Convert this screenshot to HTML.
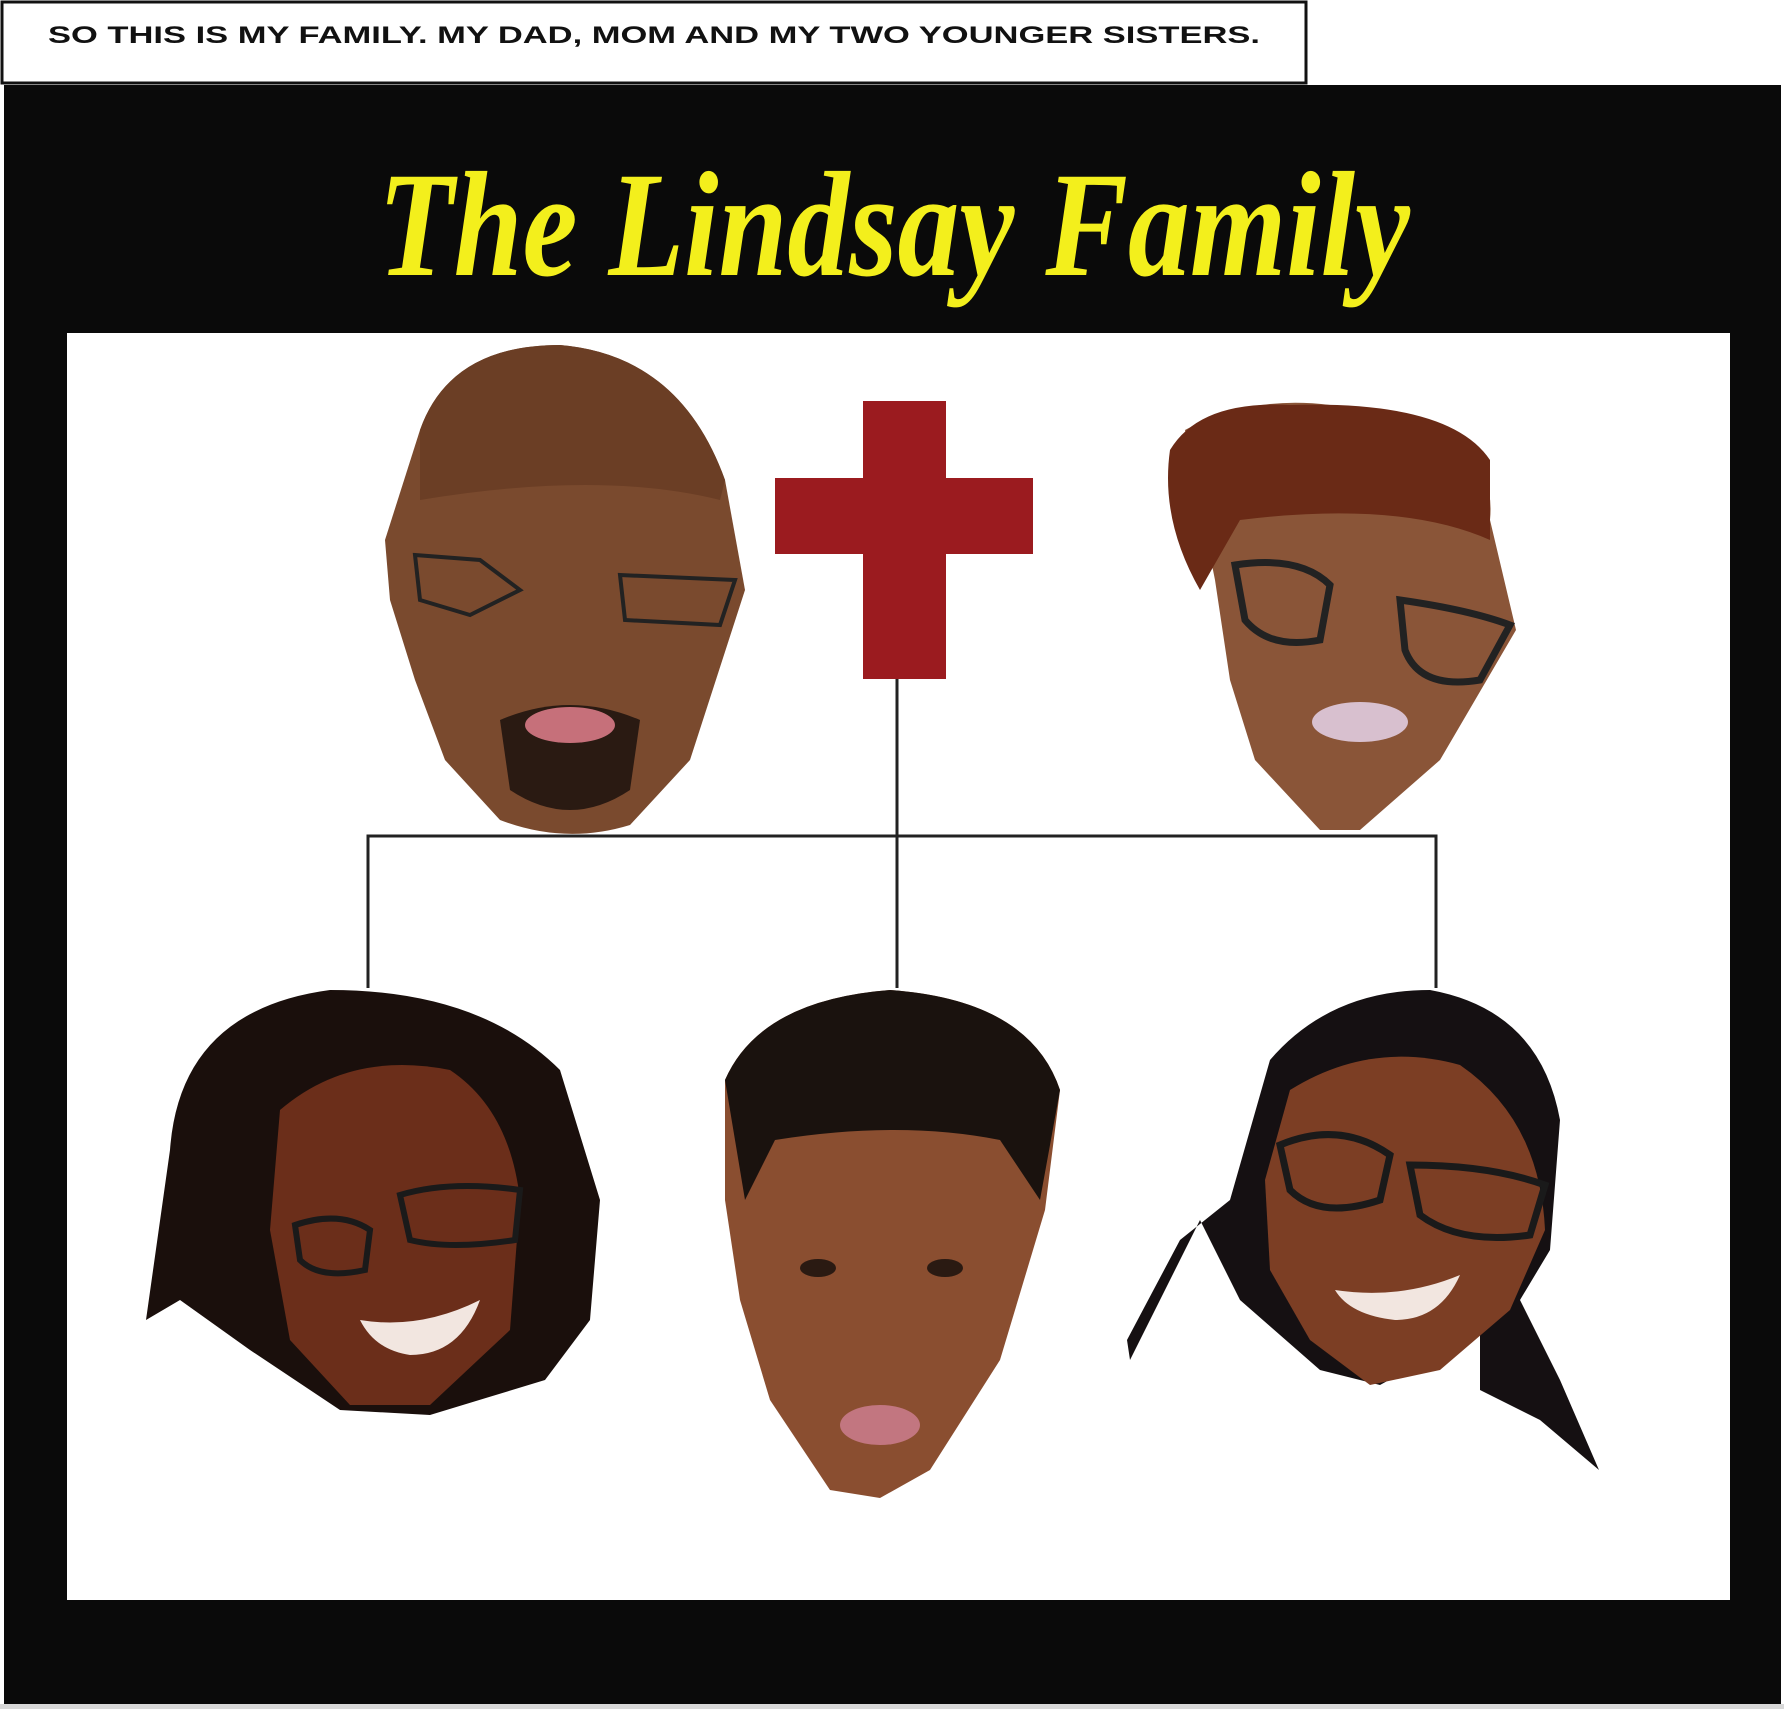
<!DOCTYPE html>
<html><head><meta charset="utf-8"><style>
html,body{margin:0;padding:0;background:#fff;}
svg{display:block}
</style></head><body>
<svg width="1784" height="1709" viewBox="0 0 1784 1709" xmlns="http://www.w3.org/2000/svg">
<rect width="1784" height="1709" fill="#fff"/>
<rect x="0" y="1704" width="1784" height="5" fill="#d8d8d8"/>
<rect x="2" y="2" width="1304" height="81" fill="#fff" stroke="#111" stroke-width="3"/>
<text x="48" y="43" font-family="Liberation Sans, sans-serif" font-weight="bold" font-size="24" fill="#111" textLength="1212" lengthAdjust="spacingAndGlyphs">SO THIS IS MY FAMILY. MY DAD, MOM AND MY TWO YOUNGER SISTERS.</text>
<rect x="4" y="85" width="1777" height="1619" fill="#0a0a0a"/>
<text x="378" y="275" font-family="Liberation Serif, serif" font-weight="bold" font-style="italic" font-size="150" fill="#f3ef1c" textLength="1032" lengthAdjust="spacingAndGlyphs">The Lindsay Family</text>
<rect x="67" y="333" width="1663" height="1267" fill="#fff"/>
<rect x="863" y="401" width="83" height="278" fill="#9b1b1f"/>
<rect x="775" y="478" width="258" height="76" fill="#9b1b1f"/>
<g stroke="#222" stroke-width="3" fill="none">
<path d="M897 679V988M368 988V836H1436V988"/>
</g>
<!-- dad -->
<path d="M420 430Q450 345 560 345Q680 355 725 480L745 590L690 760L630 825Q565 845 500 820L445 760L415 680L390 600L385 540Z" fill="#7a4a2e"/>
<path d="M420 430Q450 345 560 345Q680 355 725 480L720 500Q600 470 420 500Z" fill="#6b3e25"/>
<path d="M415 555L480 560L520 590L470 615L420 600Z M620 575L735 580L720 625L625 620Z" fill="none" stroke="#222" stroke-width="4"/>
<path d="M500 720Q570 690 640 720L630 790Q570 830 510 790Z" fill="#2a1a12"/>
<ellipse cx="570" cy="725" rx="45" ry="18" fill="#c6707a"/>
<!-- mom -->
<path d="M1185 430Q1250 395 1330 405Q1500 420 1490 520L1516 630L1440 760L1360 830L1320 830L1255 760L1230 680L1215 580Z" fill="#8a5538"/>
<path d="M1170 450Q1200 400 1290 405Q1450 400 1490 460L1490 540Q1400 500 1240 520L1200 590Q1160 520 1170 450Z" fill="#6a2a16"/>
<path d="M1235 565Q1300 555 1330 585L1320 640Q1270 650 1245 620Z M1400 600Q1470 610 1510 625L1480 680Q1420 690 1405 650Z" fill="none" stroke="#222" stroke-width="7"/>
<ellipse cx="1360" cy="722" rx="48" ry="20" fill="#d8c0cf"/>
<!-- girl left -->
<path d="M170 1150Q180 1010 330 990Q480 990 560 1070L600 1200L590 1320L545 1380L430 1415L340 1410L250 1350L180 1300L146 1320Z" fill="#1a0f0c"/>
<path d="M280 1110Q350 1050 450 1070Q510 1110 520 1200L510 1330L430 1405L350 1405L290 1340L270 1230Z" fill="#6b2e1a"/>
<path d="M295 1225Q340 1210 370 1230L365 1270Q320 1280 300 1260Z M400 1195Q450 1180 520 1190L515 1240Q450 1250 410 1240Z" fill="none" stroke="#1a1a1a" stroke-width="6"/>
<path d="M360 1320Q420 1330 480 1300Q460 1355 410 1355Q375 1350 360 1320Z" fill="#f2e6e0"/>
<!-- boy -->
<path d="M725 1080Q760 1000 890 990Q1030 1000 1060 1090L1045 1210L1000 1360L930 1470L880 1498L830 1490L770 1400L740 1300L725 1200Z" fill="#8a4e30"/>
<path d="M725 1080Q760 1000 890 990Q1030 1000 1060 1090L1040 1200L1000 1140Q900 1120 775 1140L745 1200Z" fill="#1a120e"/>
<ellipse cx="818" cy="1268" rx="18" ry="9" fill="#2a1a12"/>
<ellipse cx="945" cy="1268" rx="18" ry="9" fill="#2a1a12"/>
<ellipse cx="880" cy="1425" rx="40" ry="20" fill="#c27680"/>
<!-- girl right -->
<path d="M1270 1060Q1330 990 1430 990Q1540 1010 1560 1120L1550 1250L1520 1300L1560 1380L1599 1470L1540 1420L1480 1390L1480 1330L1380 1385L1320 1370L1240 1300L1200 1220L1130 1360L1127 1340L1180 1240L1230 1200Z" fill="#151012"/>
<path d="M1290 1090Q1370 1040 1460 1065Q1540 1120 1545 1230L1510 1310L1440 1370L1370 1385L1310 1340L1270 1270L1265 1180Z" fill="#7c3e24"/>
<path d="M1280 1145Q1340 1120 1390 1155L1380 1200Q1320 1220 1290 1190Z M1410 1165Q1490 1165 1545 1185L1530 1235Q1460 1245 1420 1215Z" fill="none" stroke="#1a1a1a" stroke-width="7"/>
<path d="M1335 1290Q1400 1300 1460 1275Q1440 1320 1395 1320Q1350 1315 1335 1290Z" fill="#f2e6e0"/>
</svg>
</body></html>
